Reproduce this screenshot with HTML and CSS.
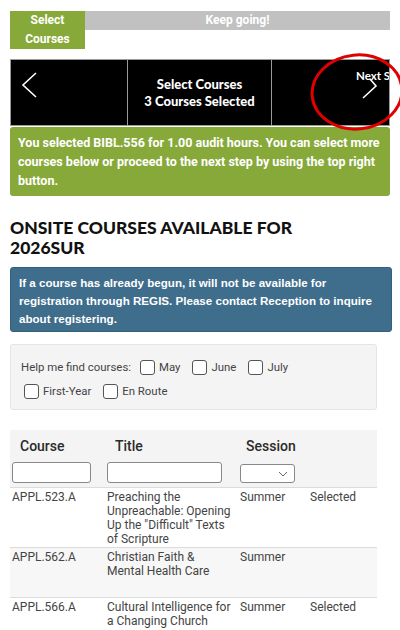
FILE: index.html
```html
<!DOCTYPE html>
<html>
<head>
<meta charset="utf-8">
<link rel="stylesheet" href="styles.css">
</head>
<body>
<div class="page">
  <div class="progress">
    <div class="step-current">Select<br>Courses</div>
    <div class="step-rest">Keep going!</div>
  </div>

  <div class="nav">
    <div class="nav-cell nav-prev">
      <svg class="chev" width="16" height="26" viewBox="0 0 16 26"><path d="M15 1 L2 13 L15 25" fill="none" stroke="#fff" stroke-width="1.6"/></svg>
    </div>
    <div class="nav-cell nav-mid">Select Courses<br>3 Courses Selected</div>
    <div class="nav-cell nav-next">
      <span class="next-label">Next Step</span>
      <svg class="chev chev-r" width="16" height="22" viewBox="0 0 16 22"><path d="M1 21 L14 9 L8 2" fill="none" stroke="#fff" stroke-width="1.6"/></svg>
    </div>
    <svg class="circle" width="96" height="80" viewBox="0 0 96 80"><ellipse cx="48" cy="40" rx="45" ry="37" fill="none" stroke="#e00000" stroke-width="3" transform="rotate(-6 48 40)"/></svg>
  </div>

  <div class="alert-green">You selected BIBL.556 for 1.00 audit hours. You can select more courses below or proceed to the next step by using the top right button.</div>

  <h2 class="heading">ONSITE COURSES AVAILABLE FOR 2026SUR</h2>

  <div class="alert-blue">If a course has already begun, it will not be available for registration through REGIS. Please contact Reception to inquire about registering.</div>

  <div class="filter">
    <span class="filter-label">Help me find courses:</span>
    <label class="opt"><span class="box"></span>May</label>
    <label class="opt"><span class="box"></span>June</label>
    <label class="opt"><span class="box"></span>July</label>
    <span class="break"></span>
    <label class="opt opt-first"><span class="box"></span>First-Year</label>
    <label class="opt"><span class="box"></span>En Route</label>
  </div>

  <table class="courses">
    <thead>
      <tr class="head-row">
        <th class="c1">Course</th>
        <th class="c2">Title</th>
        <th class="c3">Session</th>
        <th class="c4"></th>
      </tr>
      <tr class="filter-row">
        <td><div class="inp inp1"></div></td>
        <td><div class="inp inp2"></div></td>
        <td><div class="sel"><svg width="10" height="6" viewBox="0 0 10 6"><path d="M1 1 L5 5 L9 1" fill="none" stroke="#666" stroke-width="1"/></svg></div></td>
        <td></td>
      </tr>
    </thead>
    <tbody>
      <tr class="r1">
        <td>APPL.523.A</td>
        <td>Preaching the Unpreachable: Opening Up the "Difficult" Texts of Scripture</td>
        <td>Summer</td>
        <td>Selected</td>
      </tr>
      <tr class="r2 alt">
        <td>APPL.562.A</td>
        <td>Christian Faith &amp; Mental Health Care</td>
        <td>Summer</td>
        <td></td>
      </tr>
      <tr class="r3">
        <td>APPL.566.A</td>
        <td>Cultural Intelligence for a Changing Church</td>
        <td>Summer</td>
        <td>Selected</td>
      </tr>
    </tbody>
  </table>
</div>
</body>
</html>
```
FILE: styles.css
```css
* { box-sizing: border-box; }
html, body { margin: 0; padding: 0; background: #fff; overflow: hidden; }
body { font-family: Roboto, "Liberation Sans", sans-serif; }
.page { padding: 11px 10px 0 10px; width: 400px; }

.progress { display: flex; width: 380px; }
.step-current {
  width: 75px; height: 38px; background: #87a93a; color: #fff;
  font-weight: 700; font-size: 12px; line-height: 19px; text-align: center;
}
.step-rest {
  flex: 1; height: 19px; background: #c1c1c1; color: #fff;
  font-weight: 700; font-size: 12px; line-height: 19px; text-align: center;
}

.nav {
  position: relative; display: flex; width: 380px; height: 67px;
  margin-top: 10px; background: #000; border: 1px solid #9a9a9a;
}
.nav-cell { height: 100%; position: relative; }
.nav-prev { width: 117px; border-right: 1px solid #9a9a9a; }
.nav-mid {
  width: 144px; border-right: 1px solid #9a9a9a; color: #fff;
  font-family: Lato, sans-serif; font-weight: 900; font-size: 13px; line-height: 17px;
  text-align: center; padding-top: 16px;
}
.nav-next { flex: 1; overflow: hidden; }
.chev { position: absolute; }
.nav-prev .chev { left: 10px; top: 12px; }
.chev-r { left: 90px; top: 17px; }
.next-label {
  position: absolute; left: 84px; top: 9px; color: #fff; white-space: nowrap;
  font-family: Lato, sans-serif; font-weight: 700; font-size: 11.5px;
}
.circle { position: absolute; left: 298px; top: -8px; }

.alert-green {
  width: 380px; margin-top: 1px; background: #87a93a; color: #fff;
  border-radius: 3px; font-weight: 700; font-size: 12.5px; line-height: 19px;
  padding: 6px 8px 6px 8px;
}

.heading {
  margin: 22px 0 0 0; font-family: Lato, sans-serif; font-weight: 900;
  font-size: 17.5px; line-height: 20px; color: #111; letter-spacing: 0; width: 300px;
}

.alert-blue {
  width: 382px; margin-top: 9px; background: #3f6d8c; color: #fff; border-radius: 3px;
  font-family: "Liberation Sans", sans-serif; font-weight: 700; font-size: 11.6px; line-height: 18px;
  padding: 6px 8px 3px 8px; border: 1px solid #35607c;
}

.filter {
  width: 367px; margin-top: 12px; background: #f4f4f4; border: 1px solid #e4e4e4; border-radius: 3px;
  padding: 10px 8px 6px 10px; font-size: 11.4px; color: #444; line-height: 24px;
  display: flex; flex-wrap: wrap; align-items: center; column-gap: 12px;
}
.filter-label { margin-right: -3px; }
.break { flex-basis: 100%; height: 0; }
.opt { display: inline-flex; align-items: center; }
.opt-first { margin-left: 3px; }
.box {
  display: inline-block; width: 15px; height: 15px; border: 1px solid #555; border-radius: 3px;
  background: #fff; margin-right: 4px;
}

.courses {
  width: 367px; margin-top: 20px; border-collapse: collapse; font-size: 12px; color: #444;
}
.courses thead tr { background: #f4f4f4; }
.head-row th {
  text-align: left; font-weight: 500; font-size: 14px; color: #2b2b2b;
  padding: 8px 0 0 10px; height: 29px; vertical-align: top;
}
.head-row th.c3 { padding-left: 8px; }
.c1 { width: 95px; }
.c2 { width: 133px; }
.c3 { width: 70px; }
.filter-row td { padding: 3px 0 3px 2px; vertical-align: top; height: 28px; }
.inp { height: 21px; border: 1px solid #888; border-radius: 3px; background: #fff; }
.inp1 { width: 79px; }
.inp2 { width: 115px; }
.sel {
  width: 55px; height: 19px; margin-top: 2px; border: 1px solid #888; border-radius: 3px; background: #fff;
  display: flex; align-items: center; justify-content: flex-end; padding-right: 6px;
}
.courses tbody td {
  vertical-align: top; padding: 2px 5px 0 2px; line-height: 14px; border-top: 1px solid #dcdcdc;
}
.r1 td { height: 60px; }
.r2 td { height: 50px; }
.alt { background: #f7f7f7; }
```
